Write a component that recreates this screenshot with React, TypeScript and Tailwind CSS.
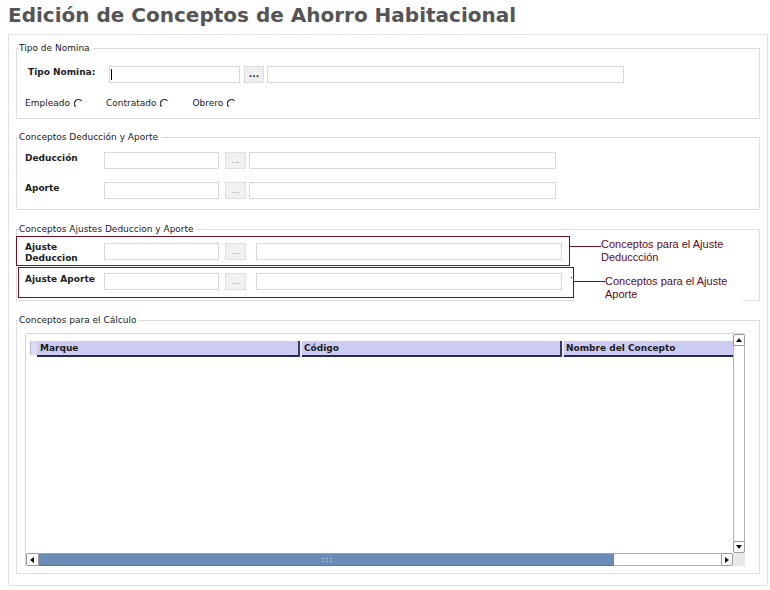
import React from "react";

const Radio = () => (
  <svg width="9" height="9" viewBox="0 0 9 9" className="ml-[4px]">
    <path d="M1.6 7.6 A3.6 3.6 0 0 1 7.4 1.8" fill="none" stroke="#3a3a3a" strokeWidth="1.4" />
    <path d="M7.4 1.8 L8.2 2.4" fill="none" stroke="#9a9a9a" strokeWidth="1" />
  </svg>
);

const Legend = ({ children }: { children: React.ReactNode }) => (
  <legend className="ml-[2px] pr-[3px] text-[9px] leading-[12px] text-[#222]">{children}</legend>
);

const Dots = ({ strong }: { strong?: boolean }) => (
  <div
    className={
      strong
        ? "flex h-[17px] w-[20px] items-center justify-center border border-[#dcdcdc] bg-[#efefef] text-[9px] font-bold leading-none text-[#222]"
        : "flex h-[17px] w-[21px] items-center justify-center border border-[#e0e0e0] bg-[#f1f1f1] text-[9px] leading-none text-[#9a9a9a]"
    }
  >
    ...
  </div>
);

const UpTri = () => (
  <svg width="6" height="4" viewBox="0 0 6 4"><path d="M0 4 L3 0 L6 4 Z" fill="#111" /></svg>
);
const DownTri = () => (
  <svg width="6" height="4" viewBox="0 0 6 4"><path d="M0 0 L3 4 L6 0 Z" fill="#111" /></svg>
);
const LeftTri = () => (
  <svg width="4" height="6" viewBox="0 0 4 6"><path d="M4 0 L0 3 L4 6 Z" fill="#111" /></svg>
);
const RightTri = () => (
  <svg width="4" height="6" viewBox="0 0 4 6"><path d="M0 0 L4 3 L0 6 Z" fill="#111" /></svg>
);

export default function App() {
  return (
    <div className="relative h-[590px] w-[770px] overflow-hidden bg-white font-['DejaVu_Sans',sans-serif] text-[#222]">
      {/* Title */}
      <div className="h-[34px] pl-[8px] pt-[3px] text-[20px] font-bold leading-[24px] text-[#555]">
        Edición de Conceptos de Ahorro Habitacional
      </div>

      {/* Outer box */}
      <div className="ml-[8px] h-[552px] w-[760px] border border-[#e2e2e2] pt-[7px]">
        {/* Tipo de Nomina */}
        <fieldset className="ml-[7px] w-[744px] border border-[#dedede] pb-[9px] pt-[12px]">
          <Legend>Tipo de Nomina</Legend>
          <div className="flex h-[17px] items-start pl-[11px]">
            <div className="w-[81px] text-[9px] font-bold leading-[12px]">Tipo Nomina:</div>
            <div className="flex h-[17px] w-[131px] items-center border border-[#dadada] bg-white pl-[1px]">
              <div className="h-[11px] w-[1px] bg-black" />
            </div>
            <div className="ml-[4px]">
              <Dots strong />
            </div>
            <div className="ml-[3px] h-[17px] w-[357px] border border-[#dadada] bg-white" />
          </div>
          <div className="mt-[14px] flex h-[12px] items-center pl-[8px] text-[9px] leading-[12px]">
            <span>Empleado</span>
            <Radio />
            <span className="ml-[23px]">Contratado</span>
            <Radio />
            <span className="ml-[23px]">Obrero</span>
            <Radio />
          </div>
        </fieldset>

        {/* Conceptos Deducción y Aporte */}
        <fieldset className="ml-[7px] mt-[12px] w-[744px] border border-[#dedede] pb-[10px] pt-[9px]">
          <Legend>Conceptos Deducción y Aporte</Legend>
          <div className="flex h-[17px] items-start pl-[8px]">
            <div className="w-[79px] text-[9px] font-bold leading-[12px]">Deducción</div>
            <div className="h-[17px] w-[115px] border border-[#dadada] bg-white" />
            <div className="ml-[6px]">
              <Dots />
            </div>
            <div className="ml-[3px] h-[17px] w-[307px] border border-[#dadada] bg-white" />
          </div>
          <div className="mt-[13px] flex h-[17px] items-start pl-[8px]">
            <div className="w-[79px] text-[9px] font-bold leading-[12px]">Aporte</div>
            <div className="h-[17px] w-[115px] border border-[#dadada] bg-white" />
            <div className="ml-[6px]">
              <Dots />
            </div>
            <div className="ml-[3px] h-[17px] w-[307px] border border-[#dadada] bg-white" />
          </div>
        </fieldset>

        {/* Conceptos Ajustes Deduccion y Aporte */}
        <fieldset className="ml-[7px] mt-[13px] w-[744px] border border-[#dedede] pb-[10px] pt-[8px]">
          <Legend>Conceptos Ajustes Deduccion y Aporte</Legend>
          <div className="flex h-[17px] items-start pl-[8px]">
            <div className="-mt-[1px] w-[79px] text-[9px] font-bold leading-[11px]">
              Ajuste
              <br />
              Deduccion
            </div>
            <div className="h-[17px] w-[115px] border border-[#dadada] bg-white" />
            <div className="ml-[6px]">
              <Dots />
            </div>
            <div className="ml-[10px] h-[17px] w-[306px] border border-[#dadada] bg-white" />
          </div>
          <div className="mt-[13px] flex h-[17px] items-start pl-[8px]">
            <div className="w-[79px] text-[9px] font-bold leading-[12px]">Ajuste Aporte</div>
            <div className="h-[17px] w-[115px] border border-[#dadada] bg-white" />
            <div className="ml-[6px]">
              <Dots />
            </div>
            <div className="ml-[10px] h-[17px] w-[306px] border border-[#dadada] bg-white" />
          </div>
        </fieldset>

        {/* Conceptos para el Cálculo */}
        <fieldset className="ml-[7px] mt-[13px] w-[744px] border border-[#dedede] pb-[7px] pt-[7px]">
          <Legend>Conceptos para el Cálculo</Legend>
          <div className="ml-[8px] flex h-[233px] w-[720px] flex-col border-l border-t border-[#d6d6d6]">
            <div className="flex h-[219px]">
              {/* data area */}
              <div className="w-[707px] pl-[4px] pt-[7px]">
                <div className="flex h-[16px] text-[9px] font-bold leading-[14px] text-[#1c1c1c]">
                  <div className="h-[14px] w-[7px] border-l border-[#b8b8d8] bg-[#dcdcf6]" />
                  <div className="flex w-[261px] flex-col">
                    <div className="h-[14px] bg-[#cbcbf3] pl-[3px]">Marque</div>
                    <div className="h-[2px] bg-[#2a2a4a]" />
                  </div>
                  <div className="h-[16px] w-[2px] bg-[#3a3a5a]" />
                  <div className="h-[16px] w-[2px] bg-[#e6e6fb]" />
                  <div className="flex w-[258px] flex-col">
                    <div className="h-[14px] bg-[#cbcbf3] pl-[2px]">Código</div>
                    <div className="h-[2px] bg-[#2a2a4a]" />
                  </div>
                  <div className="h-[16px] w-[2px] bg-[#3a3a5a]" />
                  <div className="h-[16px] w-[2px] bg-[#e6e6fb]" />
                  <div className="flex w-[169px] flex-col">
                    <div className="h-[14px] bg-[#cbcbf3] pl-[2px]">Nombre del Concepto</div>
                    <div className="h-[2px] bg-[#2a2a4a]" />
                  </div>
                </div>
              </div>
              {/* vertical scrollbar */}
              <div className="flex w-[12px] flex-col">
                <div className="flex h-[12px] items-center justify-center rounded-t-[2px] border border-[#9c9c9c] bg-white">
                  <UpTri />
                </div>
                <div className="flex-1 border-x border-[#b4b4b4] bg-white" />
                <div className="flex h-[12px] items-center justify-center rounded-b-[2px] border border-[#9c9c9c] bg-white">
                  <DownTri />
                </div>
              </div>
            </div>
            {/* horizontal scrollbar */}
            <div className="flex h-[13px]">
              <div className="flex h-[13px] w-[13px] items-center justify-center rounded-l-[2px] border border-[#9c9c9c] bg-white">
                <LeftTri />
              </div>
              <div className="flex h-[13px] w-[576px] items-center justify-center border-y border-t-[#88a6c8] border-b-[#55789f] bg-[#6a8cb6]">
                <div className="grid grid-cols-3 gap-[2px]">
                  <div className="h-[1px] w-[2px] bg-[#a9c1dc]" />
                  <div className="h-[1px] w-[2px] bg-[#a9c1dc]" />
                  <div className="h-[1px] w-[2px] bg-[#a9c1dc]" />
                  <div className="h-[1px] w-[2px] bg-[#a9c1dc]" />
                  <div className="h-[1px] w-[2px] bg-[#a9c1dc]" />
                  <div className="h-[1px] w-[2px] bg-[#a9c1dc]" />
                </div>
              </div>
              <div className="h-[13px] w-[107px] border-y border-[#b4b4b4] bg-white" />
              <div className="flex h-[13px] w-[12px] items-center justify-center rounded-r-[2px] border border-[#9c9c9c] bg-white">
                <RightTri />
              </div>
              <div className="h-[13px] w-[12px] bg-[#e8e8e8]" />
            </div>
          </div>
        </fieldset>
      </div>

      {/* Annotations (hand-drawn overlays) */}
      <div className="absolute left-[575px] top-[299px] h-[3px] w-[168px] bg-white" />
      <div className="absolute left-[16px] top-[236px] h-[30px] w-[554px] border border-[#6b1323]" />
      <div className="absolute left-[18px] top-[267px] h-[31px] w-[556px] border border-[#6b1323]" />
      <div className="absolute left-[570px] top-[246px] h-[1px] w-[31px] bg-[#6b1323]" />
      <div className="absolute left-[574px] top-[281px] h-[1px] w-[31px] bg-[#6b1323]" />
      <div className="absolute left-[571px] top-[277px] h-[1px] w-[1px] bg-[#6b1323]" />
      <div className="absolute left-[601px] top-[238px] font-['Liberation_Sans',Arial,sans-serif] text-[11px] leading-[13px] text-[#5e0b1a]">
        Conceptos para el Ajuste
        <br />
        Deduccción
      </div>
      <div className="absolute left-[605px] top-[275px] font-['Liberation_Sans',Arial,sans-serif] text-[11px] leading-[13px] text-[#5e0b1a]">
        Conceptos para el Ajuste
        <br />
        Aporte
      </div>
    </div>
  );
}
